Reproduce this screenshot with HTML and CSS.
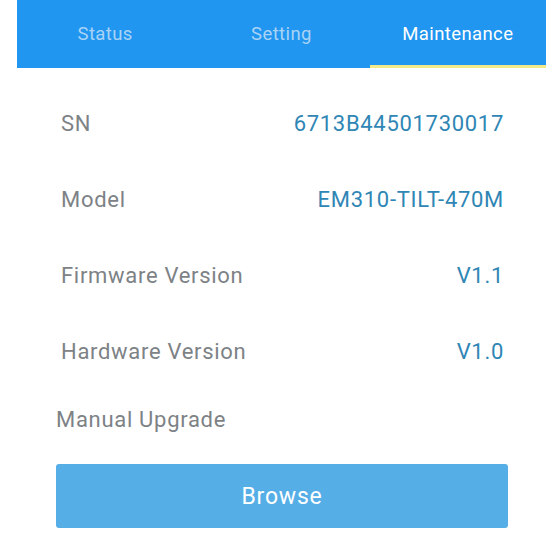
FILE: index.html
```html
<!DOCTYPE html>
<html>
<head>
    <title>Maintenance</title>
    <link rel="stylesheet" href="styles.css">
</head>
<body>
    <div class="tabs">
        <div class="tab">Status</div>
        <div class="tab">Setting</div>
        <div class="tab active">Maintenance</div>
    </div>

    <div class="content">
        <div class="row">
            <span class="label">SN</span>
            <span class="value">6713B44501730017</span>
        </div>
        <div class="row">
            <span class="label">Model</span>
            <span class="value">EM310-TILT-470M</span>
        </div>
        <div class="row">
            <span class="label">Firmware Version</span>
            <span class="value">V1.1</span>
        </div>
        <div class="row">
            <span class="label">Hardware Version</span>
            <span class="value">V1.0</span>
        </div>

        <div class="upgrade">Manual Upgrade</div>
        <button class="browseBtn">Browse</button>
    </div>
</body>
</html>
```

FILE: styles.css
```css
* {
    box-sizing: border-box;
}

body {
    margin: 0;
    font-family: Roboto, "Liberation Sans", sans-serif;
    background-color: #ffffff;
}

.tabs {
    display: flex;
    margin-left: 17px;
    width: 529px;
    height: 68px;
    background-color: #2196f0;
}

.tab {
    flex: 1;
    display: flex;
    align-items: center;
    justify-content: center;
    padding-top: 2px;
    font-size: 18.5px;
    letter-spacing: 0.4px;
    color: #a9d3f6;
    border-bottom: 3px solid transparent;
}

.tab.active {
    color: #ffffff;
    border-bottom-color: #f3ea8a;
}

.content {
    margin-top: 17px;
    padding: 0 0 0 56px;
    width: 508px;
}

.row {
    display: flex;
    align-items: center;
    justify-content: space-between;
    height: 76px;
    padding-left: 5px;
    padding-right: 4px;
    font-size: 22px;
    letter-spacing: 0.7px;
}

.label {
    color: #7d8286;
}

.value {
    color: #2f86b5;
}

.upgrade {
    margin-top: 16px;
    line-height: 30px;
    font-size: 22px;
    letter-spacing: 0.7px;
    color: #7d8286;
}

.browseBtn {
    display: block;
    width: 100%;
    height: 64px;
    margin-top: 29px;
    padding-top: 2px;
    border: none;
    border-radius: 3px;
    background-color: #56aee6;
    color: #ffffff;
    font-family: Roboto, "Liberation Sans", sans-serif;
    font-size: 23px;
    letter-spacing: 0.8px;
}
```
